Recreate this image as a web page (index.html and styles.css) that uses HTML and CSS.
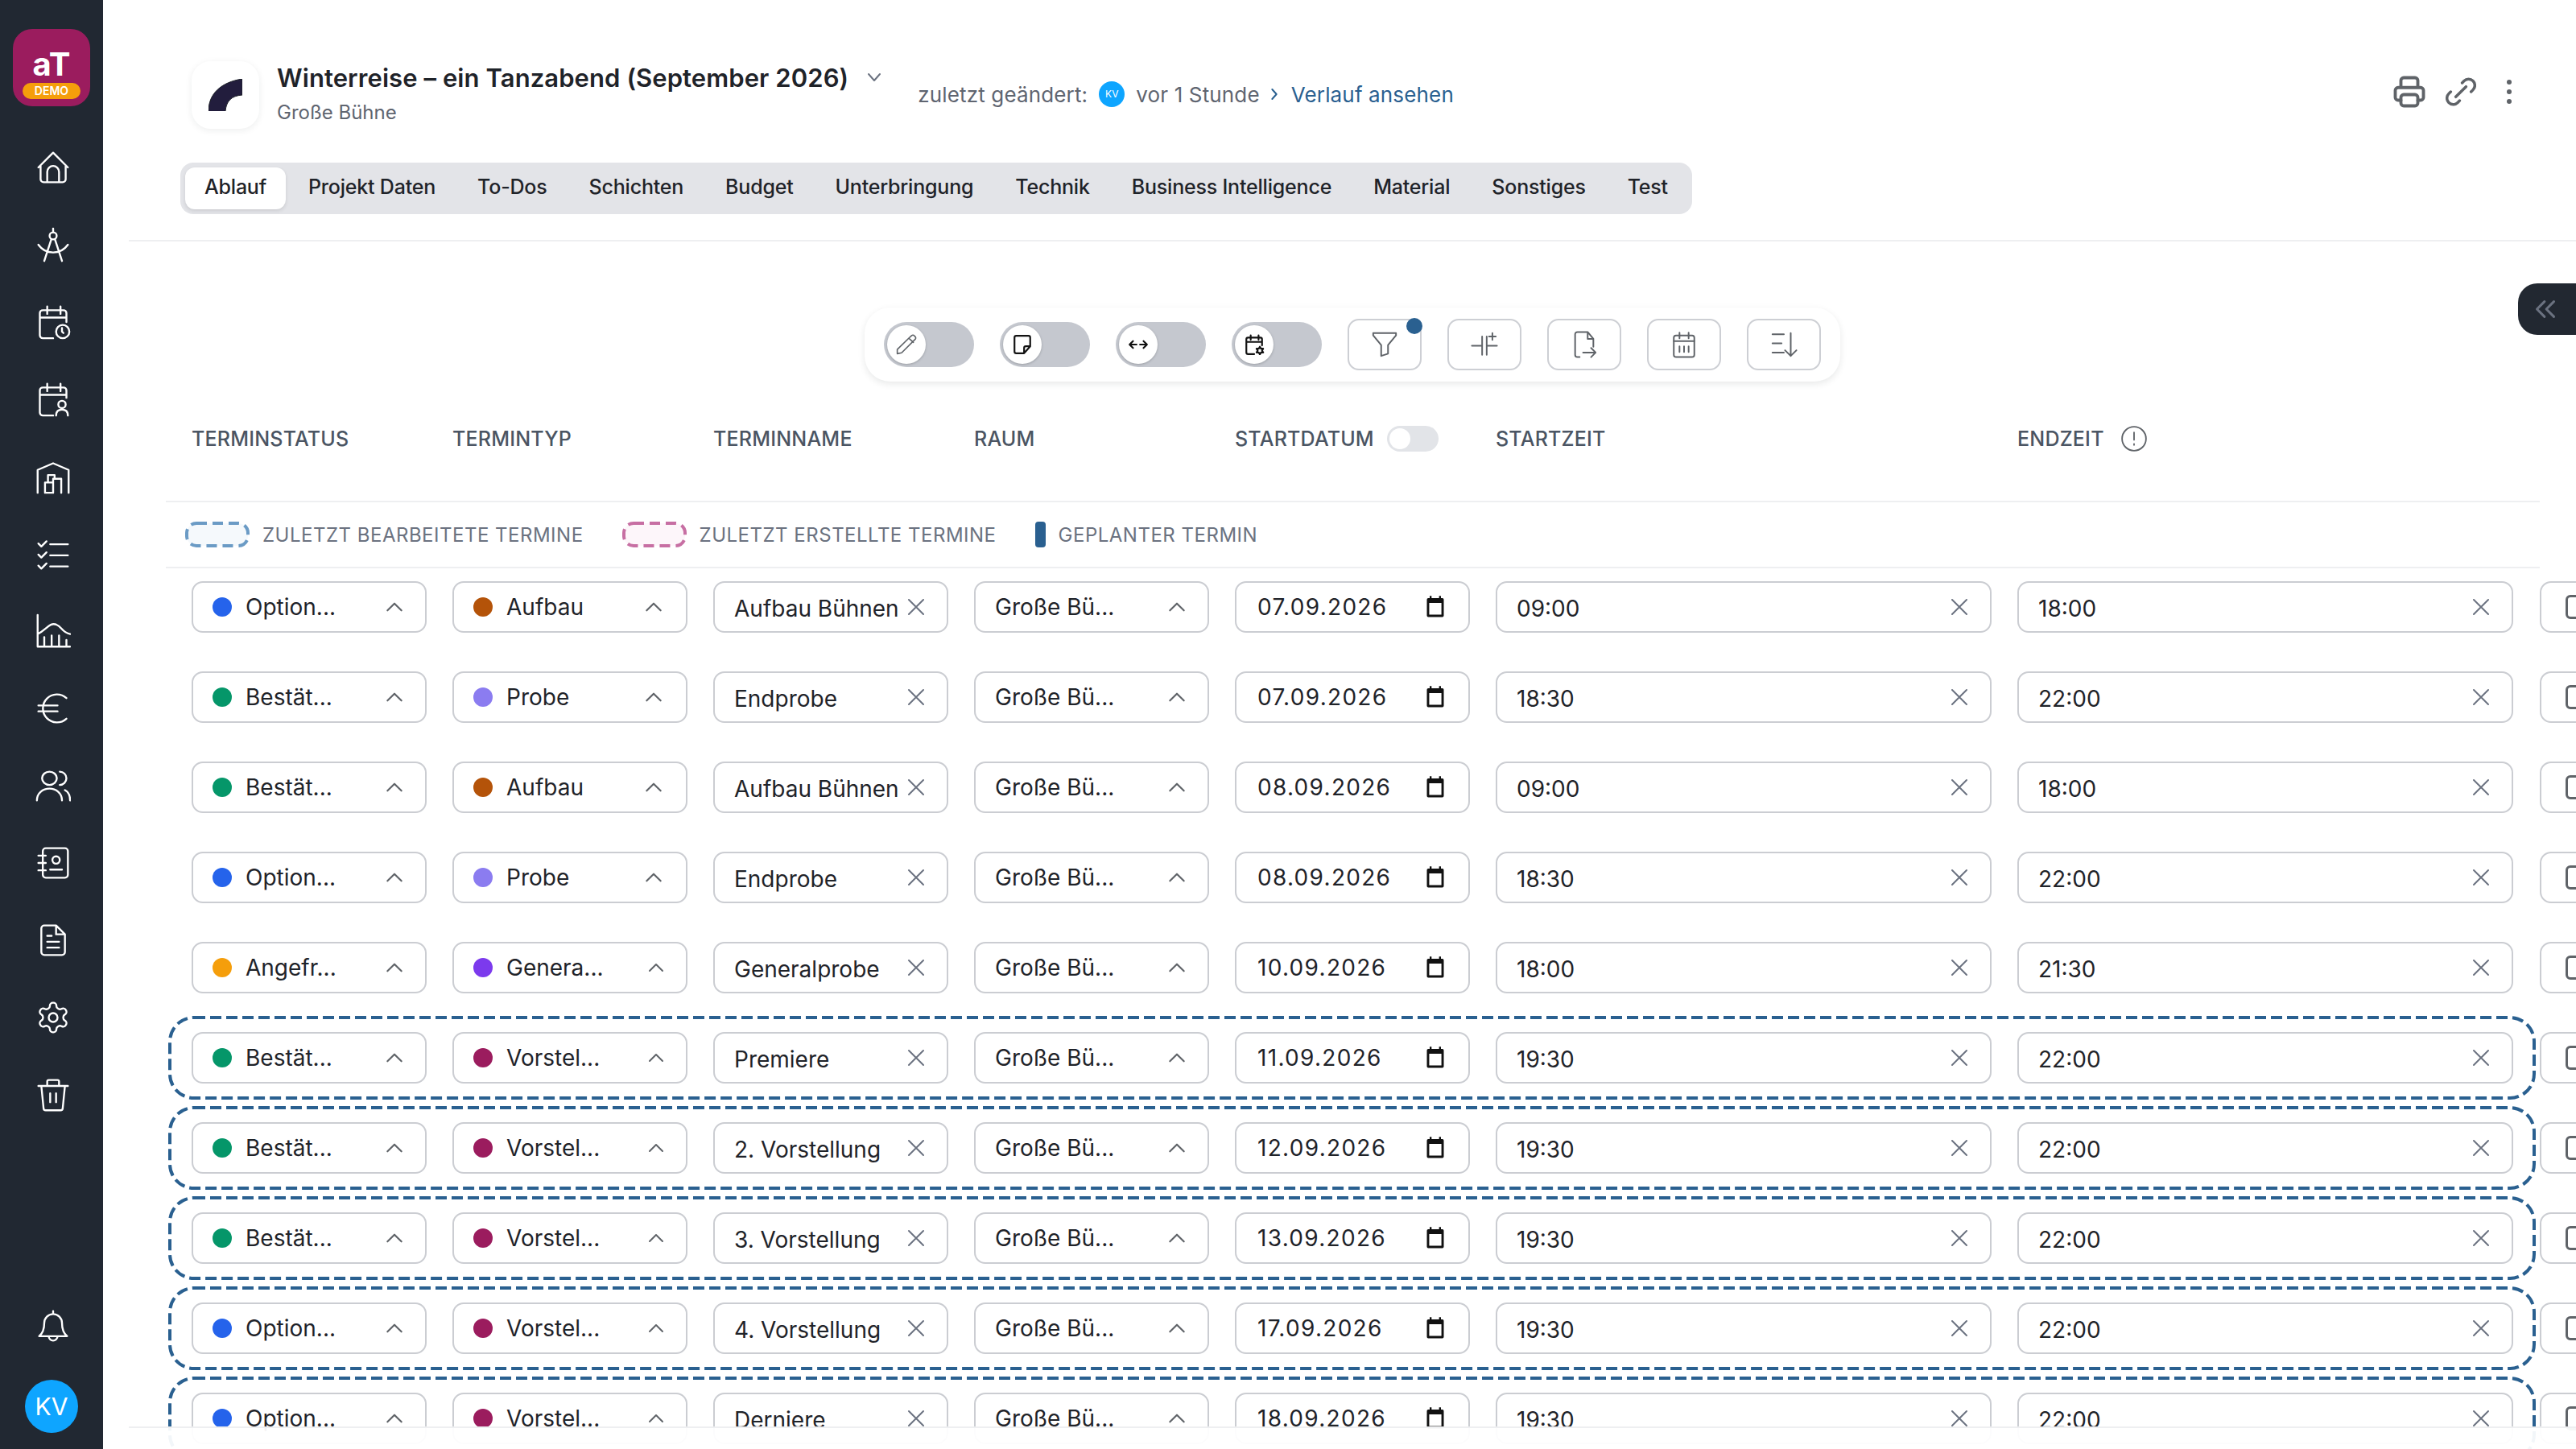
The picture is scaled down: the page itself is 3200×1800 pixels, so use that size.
FILE: index.html
```html
<!DOCTYPE html>
<html lang="de">
<head>
    <meta charset="UTF-8">
    <title>Winterreise - Ablauf</title>
    <link rel="stylesheet" href="styles.css">
</head>
<body>

    <svg class="sprite" xmlns="http://www.w3.org/2000/svg">
        <symbol id="i-home" viewBox="0 0 24 24"><path d="M2 12 12 2l10 10M3.5 11v9a2 2 0 0 0 2 2h13a2 2 0 0 0 2-2v-9M8 22v-7a4 4 0 0 1 8 0v7"/></symbol>
        <symbol id="i-compass" viewBox="0 0 24 24"><circle cx="12" cy="6" r="2.4"/><path d="M12 1v2.6M10.8 8.2 6 23M13.2 8.2 18 23M2 12c5 7 15 7 20 0"/></symbol>
        <symbol id="i-cal-clock" viewBox="0 0 24 24"><path d="M21 12V6a2 2 0 0 0-2-2H5a2 2 0 0 0-2 2v15a2 2 0 0 0 2 2h7M8 1.500v5M17 1.500v5M3 9h18"/><circle cx="18.500" cy="18.500" r="4.500"/><path d="M18 16v2.500l1 1"/></symbol>
        <symbol id="i-cal-user" viewBox="0 0 24 24"><path d="M21 11V6a2 2 0 0 0-2-2H5a2 2 0 0 0-2 2v15a2 2 0 0 0 2 2h7M8 1.500v5M17 1.500v5M3 9h18"/><circle cx="18" cy="15.500" r="2.500"/><path d="M14 23c0-3 2-4 4-4s4 1 4 4"/></symbol>
        <symbol id="i-store" viewBox="0 0 24 24"><path d="M1.500 23V7.500L12 3l10.500 4.500V23M6.500 23v-7h5.500v7zM12 23v-9.500h5.500V23M8.500 16v-5H13v2.500"/></symbol>
        <symbol id="i-tasks" viewBox="0 0 24 24"><path d="m2 5 2 2 3.500-3.500M2 12.500l2 2 3.500-3.500M2 20l2 2 3.500-3.500M10 5.500h12M10 13h12M10 20.500h12"/></symbol>
        <symbol id="i-chart" viewBox="0 0 24 24"><path d="M1.500 1v21.500h22M6 22v-6M11 22v-7M16 22v-7M21 22v-4M1.500 14c6-3 8-8 12.500-6.500 4 1.500 4 5.500 9.500 6.500"/></symbol>
        <symbol id="i-euro" viewBox="0 0 24 24"><path d="M21 5a9.500 9.500 0 1 0 0 14M2 10h13M2 14h13"/></symbol>
        <symbol id="i-users" viewBox="0 0 24 24"><ellipse cx="9.500" cy="7" rx="5" ry="4.500"/><path d="M1 22c0-5 4-8 8.500-8s8.500 3 8.500 8M16.500 2.500a4.500 4.500 0 0 1 0 9M20 15c2 1 3.500 3 3.500 7"/></symbol>
        <symbol id="i-contacts" viewBox="0 0 24 24"><rect x="5" y="2" width="17" height="20" rx="2"/><path d="M2 7h5M2 12h5M2 17h5M10 16.500h8"/><circle cx="14" cy="10" r="2.500"/></symbol>
        <symbol id="i-doc" viewBox="0 0 24 24"><path d="M14 2H6a2 2 0 0 0-2 2v16a2 2 0 0 0 2 2h12a2 2 0 0 0 2-2V8zM14 2v6h6M8 9h3M8 13h8M8 17h8"/></symbol>
        <symbol id="i-gear" viewBox="0 0 24 24"><path d="M12.220 2h-.44a2 2 0 0 0-2 2v.18a2 2 0 0 1-1 1.730l-.43.25a2 2 0 0 1-2 0l-.15-.08a2 2 0 0 0-2.730.73l-.22.38a2 2 0 0 0 .73 2.730l.15.1a2 2 0 0 1 1 1.720v.51a2 2 0 0 1-1 1.740l-.15.09a2 2 0 0 0-.73 2.730l.22.38a2 2 0 0 0 2.730.73l.15-.08a2 2 0 0 1 2 0l.43.25a2 2 0 0 1 1 1.730V20a2 2 0 0 0 2 2h.44a2 2 0 0 0 2-2v-.18a2 2 0 0 1 1-1.730l.43-.25a2 2 0 0 1 2 0l.15.08a2 2 0 0 0 2.730-.73l.22-.39a2 2 0 0 0-.73-2.730l-.15-.08a2 2 0 0 1-1-1.740v-.5a2 2 0 0 1 1-1.740l.15-.09a2 2 0 0 0 .73-2.730l-.22-.38a2 2 0 0 0-2.730-.73l-.15.08a2 2 0 0 1-2 0l-.43-.25a2 2 0 0 1-1-1.730V4a2 2 0 0 0-2-2z"/><circle cx="12" cy="12" r="3"/></symbol>
        <symbol id="i-trash" viewBox="0 0 24 24"><path d="M2 6h20M4 6l1.500 15a1.500 1.500 0 0 0 1.500 1.500h10a1.500 1.500 0 0 0 1.500-1.500L20 6M8 6V3a1 1 0 0 1 1-1h6a1 1 0 0 1 1 1v3M10 11v6M14 11v6"/></symbol>
        <symbol id="i-bell" viewBox="0 0 24 24"><path d="M2.500 19c2-1.500 3.500-3.500 3.500-9a6 6 0 0 1 12 0c0 5.500 1.500 7.500 3.500 9zM9 19a3 3 0 0 0 6 0M12 2v2"/></symbol>
        <symbol id="i-printer" viewBox="0 0 24 24"><path d="M6 9V4a2 2 0 0 1 2-2h8a2 2 0 0 1 2 2v5M6 18H4a2 2 0 0 1-2-2v-5a2 2 0 0 1 2-2h16a2 2 0 0 1 2 2v5a2 2 0 0 1-2 2h-2"/><rect x="6" y="14" width="12" height="8" rx="2"/></symbol>
        <symbol id="i-link" viewBox="0 0 24 24"><path d="m13 5 1.500-1.500a4.900 4.900 0 0 1 7 7L20 12M11 19l-1.500 1.500a4.900 4.900 0 0 1-7-7L4 12M8 16l8-8"/></symbol>
        <symbol id="i-down" viewBox="0 0 24 24"><path d="m5 8 7 8 7-8"/></symbol>
        <symbol id="i-right" viewBox="0 0 24 24"><path d="m8 3 8 9-8 9"/></symbol>
        <symbol id="i-up" viewBox="0 0 24 24"><path d="m4 16 8-8 8 8"/></symbol>
        <symbol id="i-x" viewBox="0 0 24 24"><path d="m3 3 18 18M21 3 3 21"/></symbol>
        <symbol id="i-double-left" viewBox="0 0 24 24"><path d="m11 4-8 8 8 8M21 4l-8 8 8 8"/></symbol>
        <symbol id="i-pencil" viewBox="0 0 24 24"><path d="m16 3.500 2-1.800a2.100 2.100 0 0 1 3 .2l1 1a2.100 2.100 0 0 1 .1 3L6.500 21.500 1.500 22.500v-4.800zM15 5l5 4.500"/></symbol>
        <symbol id="i-note" viewBox="0 0 24 24"><path d="M21 14V4a2 2 0 0 0-2-2H5a2 2 0 0 0-2 2v16a2 2 0 0 0 2 2h9zv0h-5a2 2 0 0 0-2 2v6"/></symbol>
        <symbol id="i-arrows" viewBox="0 0 24 24"><path d="M10 12H2M6 8l-4 4 4 4M14 12h8M18 8l4 4-4 4"/></symbol>
        <symbol id="i-cal-star" viewBox="0 0 24 24"><path d="M21 13V6a2 2 0 0 0-2-2H5a2 2 0 0 0-2 2v15a2 2 0 0 0 2 2h7M8 1.500v5M17 1.500v5M3 9h18M18.500 14.500l1.300 2.200h2.500l-1.300 2.200 1.300 2.200h-2.500l-1.300 2.200-1.300-2.200h-2.500l1.300-2.200-1.300-2.200h2.500z"/></symbol>
        <symbol id="i-filter" viewBox="0 0 24 24"><path d="M2 2h20v2l-7 8.500V20l-6 2v-9.500L2 4z"/></symbol>
        <symbol id="i-capacitor" viewBox="0 0 24 24"><path d="M1 13h9M10 5v16M14 5v16M14 13h9M19 2v6M16 5h6"/></symbol>
        <symbol id="i-file-out" viewBox="0 0 24 24"><path d="M8 23H6a2 2 0 0 1-2-2V3a2 2 0 0 1 2-2h9l5 6v7M15 1v6h5M11 19h11M18 15l4 4-4 4"/></symbol>
        <symbol id="i-cal-bars" viewBox="0 0 24 24"><rect x="3" y="4" width="18" height="19" rx="2"/><path d="M8 1.500v5M16 1.500v5M3 9h18M8 13.500v5M12 13.500v5M16 13.500v5"/></symbol>
        <symbol id="i-sort" viewBox="0 0 24 24"><path d="M2 3h10M2 11h8M2 19h10M18 2v20M13 17l5 5 5-5"/></symbol>
        <symbol id="i-info" viewBox="0 0 24 24"><circle cx="12" cy="12" r="10.500"/><path d="M12 6.500v6.500M12 16.500v1"/></symbol>
        <symbol id="i-date" viewBox="0 0 24 24"><path class="fill" d="M6 1h2v2.500h8V1h2v2.500h1.500A1.500 1.500 0 0 1 21 5v17a1.500 1.500 0 0 1-1.500 1.500h-15A1.500 1.500 0 0 1 3 22V5a1.500 1.500 0 0 1 1.500-1.500H6zm-.500 7.500V21h13V8.500z"/></symbol>
        <symbol id="i-outline" viewBox="0 0 2941 104"><rect x="2" y="2" width="2937" height="100" rx="30" stroke-dasharray="14 6"/></symbol>
    </svg>

    <aside class="sidebar">
        <div class="brand">
            <span class="brand-name">aT</span>
            <span class="brand-demo">DEMO</span>
        </div>
        <nav class="side-nav">
            <svg class="side-icon"><use href="#i-home"/></svg>
            <svg class="side-icon"><use href="#i-compass"/></svg>
            <svg class="side-icon"><use href="#i-cal-clock"/></svg>
            <svg class="side-icon"><use href="#i-cal-user"/></svg>
            <svg class="side-icon"><use href="#i-store"/></svg>
            <svg class="side-icon"><use href="#i-tasks"/></svg>
            <svg class="side-icon"><use href="#i-chart"/></svg>
            <svg class="side-icon"><use href="#i-euro"/></svg>
            <svg class="side-icon"><use href="#i-users"/></svg>
            <svg class="side-icon"><use href="#i-contacts"/></svg>
            <svg class="side-icon"><use href="#i-doc"/></svg>
            <svg class="side-icon"><use href="#i-gear"/></svg>
            <svg class="side-icon"><use href="#i-trash"/></svg>
        </nav>
        <div class="side-bottom">
            <svg class="side-icon"><use href="#i-bell"/></svg>
            <div class="side-avatar">KV</div>
        </div>
    </aside>

    <main class="content">
        <header class="page-head">
            <div class="head-top">
                <div class="project-logo">
                    <svg width="42" height="40" viewBox="0 0 42 40"><path d="M0 40C0 18 16 4 42 0v20C28 21 22 28 21 40z" fill="#221d3d"/></svg>
                </div>
                <div class="project-text">
                    <div class="project-title">Winterreise – ein Tanzabend (September 2026)</div>
                    <div class="project-sub">Große Bühne</div>
                </div>
                <svg class="title-caret"><use href="#i-down"/></svg>
                <div class="changed">
                    <span>zuletzt geändert:</span>
                    <span class="mini-avatar">KV</span>
                    <span>vor 1 Stunde</span>
                    <svg class="changed-arrow"><use href="#i-right"/></svg>
                    <span class="history-link">Verlauf ansehen</span>
                </div>
                <div class="head-actions">
                    <svg class="act-print"><use href="#i-printer"/></svg>
                    <svg class="act-link"><use href="#i-link"/></svg>
                    <div class="act-dots"><i></i><i></i><i></i></div>
                </div>
            </div>
            <div class="tabs">
                <span class="tab active">Ablauf</span>
                <span class="tab">Projekt Daten</span>
                <span class="tab">To-Dos</span>
                <span class="tab">Schichten</span>
                <span class="tab">Budget</span>
                <span class="tab">Unterbringung</span>
                <span class="tab">Technik</span>
                <span class="tab">Business Intelligence</span>
                <span class="tab">Material</span>
                <span class="tab">Sonstiges</span>
                <span class="tab">Test</span>
            </div>
        </header>

        <div class="collapse-tab"><svg><use href="#i-double-left"/></svg></div>

        <div class="toolbar">
            <div class="switch"><span class="knob"><svg class="grey"><use href="#i-pencil"/></svg></span></div>
            <div class="switch"><span class="knob"><svg><use href="#i-note"/></svg></span></div>
            <div class="switch"><span class="knob"><svg><use href="#i-arrows"/></svg></span></div>
            <div class="switch"><span class="knob"><svg><use href="#i-cal-star"/></svg></span></div>
            <div class="tool-btn"><svg><use href="#i-filter"/></svg><span class="tool-dot"></span></div>
            <div class="tool-btn"><svg><use href="#i-capacitor"/></svg></div>
            <div class="tool-btn"><svg><use href="#i-file-out"/></svg></div>
            <div class="tool-btn"><svg><use href="#i-cal-bars"/></svg></div>
            <div class="tool-btn"><svg><use href="#i-sort"/></svg></div>
        </div>

        <section class="board">
            <div class="col-heads">
                <span>Terminstatus</span>
                <span>Termintyp</span>
                <span>Terminname</span>
                <span>Raum</span>
                <span class="head-flex">Startdatum <i class="mini-switch"></i></span>
                <span>Startzeit</span>
                <span class="head-flex">Endzeit <svg class="info-icon"><use href="#i-info"/></svg></span>
            </div>

            <div class="legend">
                <span class="legend-item"><svg class="swatch swatch-edited" viewBox="0 0 80 32"><rect x="2" y="2" width="76" height="28" rx="12"/></svg>Zuletzt bearbeitete Termine</span>
                <span class="legend-item"><svg class="swatch swatch-created" viewBox="0 0 80 32"><rect x="2" y="2" width="76" height="28" rx="12"/></svg>Zuletzt erstellte Termine</span>
                <span class="legend-item"><i class="swatch-planned"></i>Geplanter Termin</span>
            </div>

            <div class="rows">
                <div class="row">
                    <div class="row-main">
                        <div class="field"><i class="dot option"></i><span class="val">Option...</span><svg class="caret"><use href="#i-up"/></svg></div>
                        <div class="field big"><i class="dot aufbau"></i><span class="val">Aufbau</span><svg class="caret"><use href="#i-up"/></svg></div>
                        <div class="field text"><span class="val">Aufbau Bühnen</span><svg class="clear"><use href="#i-x"/></svg></div>
                        <div class="field"><span class="val">Große Bü...</span><svg class="caret"><use href="#i-up"/></svg></div>
                        <div class="field date"><span class="val">07.09.2026</span><svg class="cal"><use href="#i-date"/></svg></div>
                        <div class="field text"><span class="val">09:00</span><svg class="clear"><use href="#i-x"/></svg></div>
                        <div class="field text"><span class="val">18:00</span><svg class="clear"><use href="#i-x"/></svg></div>
                    </div>
                    <div class="row-extra"><i class="check"></i></div>
                </div>
                <div class="row">
                    <div class="row-main">
                        <div class="field"><i class="dot confirmed"></i><span class="val">Bestät...</span><svg class="caret"><use href="#i-up"/></svg></div>
                        <div class="field big"><i class="dot probe"></i><span class="val">Probe</span><svg class="caret"><use href="#i-up"/></svg></div>
                        <div class="field text"><span class="val">Endprobe</span><svg class="clear"><use href="#i-x"/></svg></div>
                        <div class="field"><span class="val">Große Bü...</span><svg class="caret"><use href="#i-up"/></svg></div>
                        <div class="field date"><span class="val">07.09.2026</span><svg class="cal"><use href="#i-date"/></svg></div>
                        <div class="field text"><span class="val">18:30</span><svg class="clear"><use href="#i-x"/></svg></div>
                        <div class="field text"><span class="val">22:00</span><svg class="clear"><use href="#i-x"/></svg></div>
                    </div>
                    <div class="row-extra"><i class="check"></i></div>
                </div>
                <div class="row">
                    <div class="row-main">
                        <div class="field"><i class="dot confirmed"></i><span class="val">Bestät...</span><svg class="caret"><use href="#i-up"/></svg></div>
                        <div class="field big"><i class="dot aufbau"></i><span class="val">Aufbau</span><svg class="caret"><use href="#i-up"/></svg></div>
                        <div class="field text"><span class="val">Aufbau Bühnen</span><svg class="clear"><use href="#i-x"/></svg></div>
                        <div class="field"><span class="val">Große Bü...</span><svg class="caret"><use href="#i-up"/></svg></div>
                        <div class="field date"><span class="val">08.09.2026</span><svg class="cal"><use href="#i-date"/></svg></div>
                        <div class="field text"><span class="val">09:00</span><svg class="clear"><use href="#i-x"/></svg></div>
                        <div class="field text"><span class="val">18:00</span><svg class="clear"><use href="#i-x"/></svg></div>
                    </div>
                    <div class="row-extra"><i class="check"></i></div>
                </div>
                <div class="row">
                    <div class="row-main">
                        <div class="field"><i class="dot option"></i><span class="val">Option...</span><svg class="caret"><use href="#i-up"/></svg></div>
                        <div class="field big"><i class="dot probe"></i><span class="val">Probe</span><svg class="caret"><use href="#i-up"/></svg></div>
                        <div class="field text"><span class="val">Endprobe</span><svg class="clear"><use href="#i-x"/></svg></div>
                        <div class="field"><span class="val">Große Bü...</span><svg class="caret"><use href="#i-up"/></svg></div>
                        <div class="field date"><span class="val">08.09.2026</span><svg class="cal"><use href="#i-date"/></svg></div>
                        <div class="field text"><span class="val">18:30</span><svg class="clear"><use href="#i-x"/></svg></div>
                        <div class="field text"><span class="val">22:00</span><svg class="clear"><use href="#i-x"/></svg></div>
                    </div>
                    <div class="row-extra"><i class="check"></i></div>
                </div>
                <div class="row">
                    <div class="row-main">
                        <div class="field"><i class="dot pending"></i><span class="val">Angefr...</span><svg class="caret"><use href="#i-up"/></svg></div>
                        <div class="field small"><i class="dot general"></i><span class="val">Genera...</span><svg class="caret"><use href="#i-up"/></svg></div>
                        <div class="field text"><span class="val">Generalprobe</span><svg class="clear"><use href="#i-x"/></svg></div>
                        <div class="field"><span class="val">Große Bü...</span><svg class="caret"><use href="#i-up"/></svg></div>
                        <div class="field date"><span class="val">10.09.2026</span><svg class="cal"><use href="#i-date"/></svg></div>
                        <div class="field text"><span class="val">18:00</span><svg class="clear"><use href="#i-x"/></svg></div>
                        <div class="field text"><span class="val">21:30</span><svg class="clear"><use href="#i-x"/></svg></div>
                    </div>
                    <div class="row-extra"><i class="check"></i></div>
                </div>
                <div class="row">
                    <div class="row-main">
                        <svg class="row-outline"><use href="#i-outline"/></svg>
                        <div class="field"><i class="dot confirmed"></i><span class="val">Bestät...</span><svg class="caret"><use href="#i-up"/></svg></div>
                        <div class="field small"><i class="dot show"></i><span class="val">Vorstel...</span><svg class="caret"><use href="#i-up"/></svg></div>
                        <div class="field text"><span class="val">Premiere</span><svg class="clear"><use href="#i-x"/></svg></div>
                        <div class="field"><span class="val">Große Bü...</span><svg class="caret"><use href="#i-up"/></svg></div>
                        <div class="field date"><span class="val">11.09.2026</span><svg class="cal"><use href="#i-date"/></svg></div>
                        <div class="field text"><span class="val">19:30</span><svg class="clear"><use href="#i-x"/></svg></div>
                        <div class="field text"><span class="val">22:00</span><svg class="clear"><use href="#i-x"/></svg></div>
                    </div>
                    <div class="row-extra"><i class="check"></i></div>
                </div>
                <div class="row">
                    <div class="row-main">
                        <svg class="row-outline"><use href="#i-outline"/></svg>
                        <div class="field"><i class="dot confirmed"></i><span class="val">Bestät...</span><svg class="caret"><use href="#i-up"/></svg></div>
                        <div class="field small"><i class="dot show"></i><span class="val">Vorstel...</span><svg class="caret"><use href="#i-up"/></svg></div>
                        <div class="field text"><span class="val">2. Vorstellung</span><svg class="clear"><use href="#i-x"/></svg></div>
                        <div class="field"><span class="val">Große Bü...</span><svg class="caret"><use href="#i-up"/></svg></div>
                        <div class="field date"><span class="val">12.09.2026</span><svg class="cal"><use href="#i-date"/></svg></div>
                        <div class="field text"><span class="val">19:30</span><svg class="clear"><use href="#i-x"/></svg></div>
                        <div class="field text"><span class="val">22:00</span><svg class="clear"><use href="#i-x"/></svg></div>
                    </div>
                    <div class="row-extra"><i class="check"></i></div>
                </div>
                <div class="row">
                    <div class="row-main">
                        <svg class="row-outline"><use href="#i-outline"/></svg>
                        <div class="field"><i class="dot confirmed"></i><span class="val">Bestät...</span><svg class="caret"><use href="#i-up"/></svg></div>
                        <div class="field small"><i class="dot show"></i><span class="val">Vorstel...</span><svg class="caret"><use href="#i-up"/></svg></div>
                        <div class="field text"><span class="val">3. Vorstellung</span><svg class="clear"><use href="#i-x"/></svg></div>
                        <div class="field"><span class="val">Große Bü...</span><svg class="caret"><use href="#i-up"/></svg></div>
                        <div class="field date"><span class="val">13.09.2026</span><svg class="cal"><use href="#i-date"/></svg></div>
                        <div class="field text"><span class="val">19:30</span><svg class="clear"><use href="#i-x"/></svg></div>
                        <div class="field text"><span class="val">22:00</span><svg class="clear"><use href="#i-x"/></svg></div>
                    </div>
                    <div class="row-extra"><i class="check"></i></div>
                </div>
                <div class="row">
                    <div class="row-main">
                        <svg class="row-outline"><use href="#i-outline"/></svg>
                        <div class="field"><i class="dot option"></i><span class="val">Option...</span><svg class="caret"><use href="#i-up"/></svg></div>
                        <div class="field small"><i class="dot show"></i><span class="val">Vorstel...</span><svg class="caret"><use href="#i-up"/></svg></div>
                        <div class="field text"><span class="val">4. Vorstellung</span><svg class="clear"><use href="#i-x"/></svg></div>
                        <div class="field"><span class="val">Große Bü...</span><svg class="caret"><use href="#i-up"/></svg></div>
                        <div class="field date"><span class="val">17.09.2026</span><svg class="cal"><use href="#i-date"/></svg></div>
                        <div class="field text"><span class="val">19:30</span><svg class="clear"><use href="#i-x"/></svg></div>
                        <div class="field text"><span class="val">22:00</span><svg class="clear"><use href="#i-x"/></svg></div>
                    </div>
                    <div class="row-extra"><i class="check"></i></div>
                </div>
                <div class="row">
                    <div class="row-main">
                        <svg class="row-outline"><use href="#i-outline"/></svg>
                        <div class="field"><i class="dot option"></i><span class="val">Option...</span><svg class="caret"><use href="#i-up"/></svg></div>
                        <div class="field small"><i class="dot show"></i><span class="val">Vorstel...</span><svg class="caret"><use href="#i-up"/></svg></div>
                        <div class="field text"><span class="val">Derniere</span><svg class="clear"><use href="#i-x"/></svg></div>
                        <div class="field"><span class="val">Große Bü...</span><svg class="caret"><use href="#i-up"/></svg></div>
                        <div class="field date"><span class="val">18.09.2026</span><svg class="cal"><use href="#i-date"/></svg></div>
                        <div class="field text"><span class="val">19:30</span><svg class="clear"><use href="#i-x"/></svg></div>
                        <div class="field text"><span class="val">22:00</span><svg class="clear"><use href="#i-x"/></svg></div>
                    </div>
                    <div class="row-extra"><i class="check"></i></div>
                </div>
            </div>
        </section>

        <div class="page-foot"></div>
    </main>

</body>
</html>
```

FILE: styles.css
```css
* {
    box-sizing: border-box;
}

html,
body {
    margin: 0;
    height: 100%;
}

body {
    display: flex;
    overflow: hidden;
    background: #fff;
    color: #1f2329;
    font-family: Inter, "Noto Sans", sans-serif;
    font-size: 28px;
}

svg {
    display: block;
    fill: none;
    stroke: currentColor;
    stroke-linecap: round;
    stroke-linejoin: round;
}

.sprite {
    position: absolute;
    width: 0;
    height: 0;
}

.fill {
    fill: currentColor;
    stroke: none;
}

/* left navigation */
.sidebar {
    flex: 0 0 128px;
    height: 1800px;
    padding-top: 36px;
    background: #212832;
    color: #fff;
    display: flex;
    flex-direction: column;
    align-items: center;
}

.brand {
    width: 96px;
    height: 96px;
    padding-top: 21px;
    border-radius: 24px;
    background: #9b1c5e;
    display: flex;
    flex-direction: column;
    align-items: center;
}

.brand-name {
    font-size: 40px;
    font-weight: 700;
    line-height: 46px;
}

.brand-demo {
    width: 72px;
    height: 20px;
    border-radius: 10px;
    background: #f59e0b;
    font-size: 14px;
    font-weight: 600;
    line-height: 20px;
    text-align: center;
}

.side-nav {
    margin: 52px 0 0 4px;
    display: flex;
    flex-direction: column;
    gap: 48px;
}

.side-icon {
    width: 44px;
    height: 48px;
    stroke-width: 1.300;
}

.side-bottom {
    margin-top: auto;
    padding-bottom: 20px;
    display: flex;
    flex-direction: column;
    align-items: center;
    gap: 43px;
}

.side-bottom .side-icon {
    margin-left: 4px;
}

.side-avatar {
    width: 66px;
    height: 66px;
    border-radius: 50%;
    background: #0ea5ff;
    font-size: 30px;
    line-height: 66px;
    text-align: center;
}

/* page */
.content {
    position: relative;
    flex: 1;
    min-width: 0;
    height: 1800px;
    overflow: hidden;
}

.page-head {
    height: 300px;
    margin-left: 32px;
    padding-top: 76px;
    border-bottom: 2px solid #eeeff1;
}

.head-top {
    height: 84px;
    padding-left: 78px;
    display: flex;
}

.project-logo {
    flex: 0 0 84px;
    height: 84px;
    border-radius: 24px;
    box-shadow: 0 2px 8px rgba(31, 35, 41, .08);
    display: flex;
    align-items: center;
    justify-content: center;
}

.project-text {
    margin-left: 22px;
}

.project-title {
    font-size: 31px;
    font-weight: 600;
    letter-spacing: .08px;
    line-height: 42px;
    white-space: nowrap;
}

.project-sub {
    margin-top: 2px;
    color: #5f6570;
    font-size: 24px;
    line-height: 40px;
}

.title-caret {
    width: 24px;
    height: 24px;
    margin: 8px 0 0 20px;
    color: #6b7280;
    stroke-width: 2;
}

.changed {
    margin: 20px 0 0 42px;
    height: 42px;
    color: #5f6570;
    font-size: 26px;
    letter-spacing: .15px;
    display: flex;
    align-items: center;
    gap: 14px;
    white-space: nowrap;
}

.mini-avatar {
    width: 32px;
    height: 32px;
    border-radius: 50%;
    background: #0ea5ff;
    color: #fff;
    font-size: 12px;
    line-height: 32px;
    text-align: center;
}

.changed-arrow {
    width: 16px;
    height: 24px;
    margin: 0 -1px 0 -4px;
    color: #2a6090;
    stroke-width: 3;
}

.history-link {
    color: #2a6090;
}

.head-actions {
    margin-left: auto;
    margin-top: 18px;
    padding-right: 80px;
    height: 40px;
    color: #5f6368;
    display: flex;
    align-items: center;
}

.act-print {
    width: 42px;
    height: 42px;
    stroke-width: 2.200;
}

.act-link {
    width: 38px;
    height: 38px;
    margin-left: 24px;
    stroke-width: 2.200;
}

.act-dots {
    width: 6px;
    margin-left: 38px;
    display: flex;
    flex-direction: column;
    gap: 6px;
}

.act-dots i {
    width: 6px;
    height: 6px;
    border-radius: 50%;
    background: #5f6368;
}

.tabs {
    width: fit-content;
    height: 64px;
    margin: 42px 0 0 64px;
    padding: 6px;
    border-radius: 16px;
    background: #e3e4e8;
    display: flex;
    gap: 4px;
}

.tab {
    height: 52px;
    padding: 0 24px;
    border-radius: 12px;
    font-size: 25px;
    font-weight: 500;
    letter-spacing: -.2px;
    line-height: 48px;
    white-space: nowrap;
}

.tab.active {
    background: #fff;
    box-shadow: 0 2px 4px rgba(31, 35, 41, .12);
}

.collapse-tab {
    position: absolute;
    top: 352px;
    right: 0;
    width: 72px;
    height: 64px;
    padding: 18px 0 0 20px;
    border-radius: 24px 0 0 24px;
    background: #222831;
    color: #6b7280;
}

.collapse-tab svg {
    width: 28px;
    height: 28px;
    stroke-width: 2.600;
}

/* toolbar */
.toolbar {
    width: 1212px;
    height: 92px;
    margin: 82px 0 0 946px;
    padding: 0 24px;
    border-radius: 32px;
    box-shadow: 0 3px 8px rgba(31, 35, 41, .1);
    display: flex;
    align-items: center;
    gap: 32px;
}

.switch {
    flex: 0 0 112px;
    height: 56px;
    padding: 4px;
    border-radius: 28px;
    background: #c5c8cf;
}

.knob {
    width: 48px;
    height: 48px;
    border-radius: 50%;
    background: #fff;
    color: #111;
    box-shadow: 0 1px 3px rgba(31, 35, 41, .25);
    display: flex;
    align-items: center;
    justify-content: center;
}

.knob svg {
    width: 26px;
    height: 26px;
    stroke-width: 2;
}

.knob svg.grey {
    color: #5f6368;
    stroke-width: 1.500;
}

.tool-btn {
    position: relative;
    flex: 0 0 92px;
    height: 64px;
    border: 2px solid #cdcfd4;
    border-radius: 14px;
    color: #5f6368;
    display: flex;
    align-items: center;
    justify-content: center;
}

.tool-btn svg {
    width: 34px;
    height: 34px;
    stroke-width: 1.400;
}

.tool-dot {
    position: absolute;
    top: -3px;
    right: -3px;
    width: 20px;
    height: 20px;
    border-radius: 50%;
    background: #2a6090;
}

/* table */
.board {
    margin: 39px 0 0 78px;
    width: 2949px;
}

.col-heads {
    height: 111px;
    padding: 0 0 45px 32px;
    border-bottom: 2px solid #eeeff1;
    color: #4b5563;
    font-size: 25px;
    font-weight: 500;
    letter-spacing: .2px;
    text-transform: uppercase;
    display: grid;
    grid-template-columns: repeat(5, 292px) 616px 616px;
    column-gap: 32px;
    align-items: center;
}

.head-flex {
    display: flex;
    align-items: center;
    gap: 16px;
}

.mini-switch {
    position: relative;
    width: 64px;
    height: 32px;
    border-radius: 16px;
    background: #e2e4e8;
}

.mini-switch::after {
    content: "";
    position: absolute;
    top: 3px;
    left: 3px;
    width: 26px;
    height: 26px;
    border-radius: 50%;
    background: #fff;
}

.info-icon {
    width: 34px;
    height: 34px;
    margin-left: 4px;
    color: #5f6368;
    stroke-width: 1.300;
}

.legend {
    height: 82px;
    padding-left: 24px;
    border-bottom: 2px solid #eeeff1;
    color: #6b7280;
    font-size: 24px;
    letter-spacing: .5px;
    text-transform: uppercase;
    display: flex;
    align-items: center;
    gap: 48px;
}

.legend-item {
    display: flex;
    align-items: center;
    gap: 16px;
}

.swatch {
    width: 80px;
    height: 32px;
    stroke-width: 4;
    stroke-dasharray: 13 7;
    stroke-linecap: butt;
}

.swatch-edited {
    color: #6b9bc5;
    fill: #f5f9fc;
}

.swatch-created {
    color: #c76fa3;
    fill: #fdf6fa;
}

.swatch-planned {
    width: 13px;
    height: 32px;
    border-radius: 4px;
    background: #2a6090;
}

.rows {
    margin-top: -4px;
}

.row {
    height: 104px;
    margin-bottom: 8px;
    margin-left: 3px;
    display: flex;
    align-items: center;
}

.row-main {
    position: relative;
    flex: 0 0 2941px;
    padding: 20px 28px 20px 29px;
    display: grid;
    grid-template-columns: repeat(5, 292px) 616px 616px;
    column-gap: 32px;
}

/* dashed frame of recently edited rows, drawn over the row */
.row-outline {
    position: absolute;
    top: 0;
    left: 0;
    width: 2941px;
    height: 104px;
    color: #2a6090;
    stroke-width: 4;
    stroke-linecap: butt;
}

.field {
    height: 64px;
    padding: 0 25px 0 24px;
    border: 2px solid #cbcdd2;
    border-radius: 14px;
    display: flex;
    align-items: center;
}

.val {
    white-space: nowrap;
}

.dot {
    flex: 0 0 24px;
    height: 24px;
    margin-right: 17px;
    border-radius: 50%;
}

.option { background: #2563eb; }
.confirmed { background: #059669; }
.pending { background: #f59e0b; }
.aufbau { background: #b45309; }
.probe { background: #8b7cf0; }
.general { background: #7c3aed; }
.show { background: #9b1c5e; }

.caret {
    width: 26px;
    height: 26px;
    margin: 0 0 0 auto;
    color: #5f6368;
    stroke-width: 2;
}

.field.big .caret {
    margin-right: 2px;
}

.field.small .caret {
    width: 24px;
    height: 24px;
}

.field.text .val {
    padding-top: 4px;
}

.clear {
    flex: 0 0 24px;
    width: 24px;
    height: 24px;
    margin: 0 1px 0 auto;
    color: #6b7280;
    stroke-width: 2;
}

.field.date .val {
    margin-left: 2px;
    letter-spacing: 1.300px;
}

.cal {
    width: 28px;
    height: 28px;
    margin: -2px 2px 0 auto;
    color: #111;
}

.row-extra {
    flex: 0 0 200px;
    height: 64px;
    margin-left: 5px;
    padding-left: 30px;
    border: 2px solid #cbcdd2;
    border-radius: 14px;
    display: flex;
    align-items: center;
}

.check {
    width: 30px;
    height: 30px;
    border: 3px solid #5f6368;
    border-radius: 6px;
}

.page-foot {
    position: absolute;
    left: 32px;
    right: 0;
    bottom: 0;
    height: 28px;
    border-top: 2px solid #eeeff1;
    background: rgba(255, 255, 255, .94);
}
```
